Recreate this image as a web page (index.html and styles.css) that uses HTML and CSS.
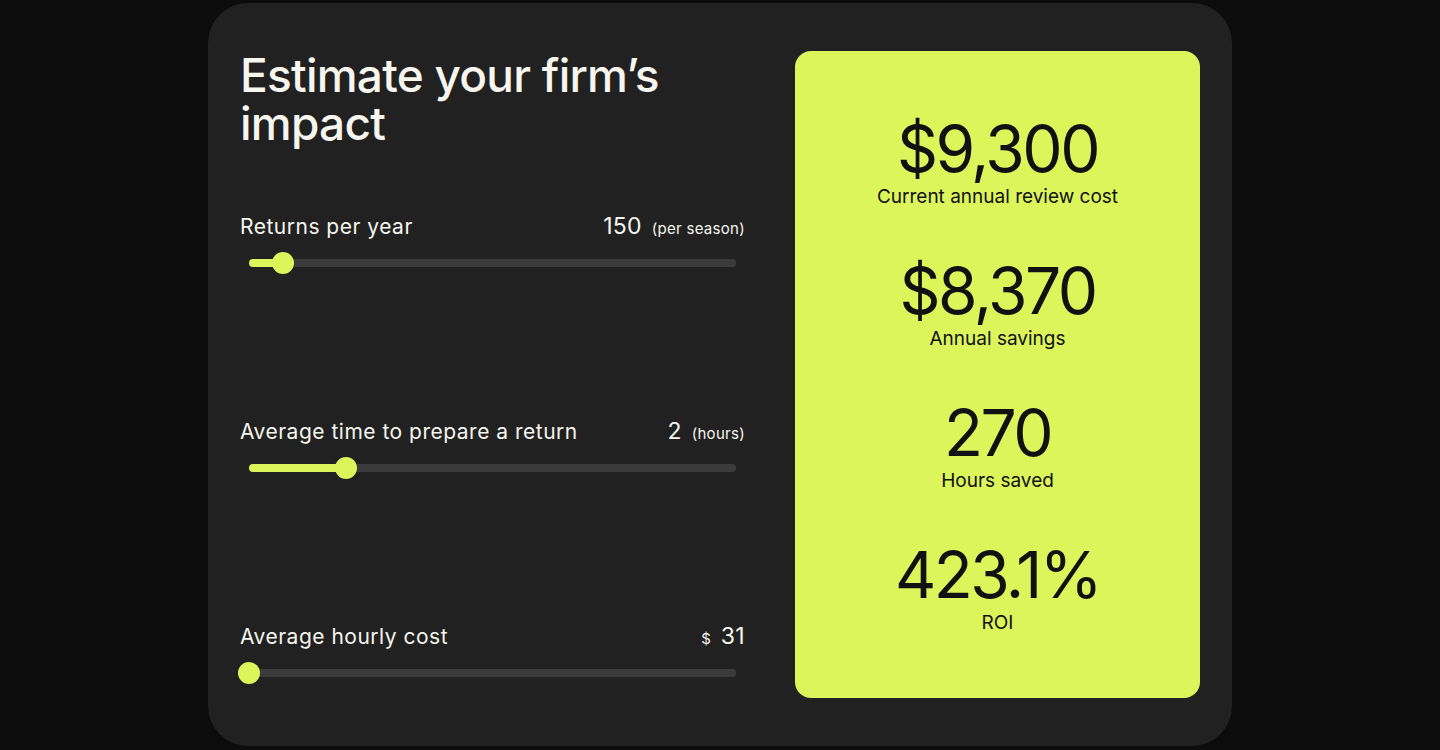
FILE: index.html
```html
<!DOCTYPE html>
<html lang="en">
<head>
    <meta charset="UTF-8">
    <meta name="viewport" content="width=device-width, initial-scale=1.0">
    <title>ROI Calculator</title>
    <link rel="stylesheet" href="styles.css">
</head>
<body>
    <div class="calculator">
        <div class="inputs">
            <h1>Estimate your firm’s impact</h1>

            <div class="field">
                <div class="field-head">
                    <span class="label">Returns per year</span>
                    <span class="value">150 <small>(per season)</small></span>
                </div>
                <div class="slider">
                    <div class="track"></div>
                    <div class="fill" style="width: 7%"></div>
                    <div class="thumb" style="left: 7%"></div>
                </div>
            </div>

            <div class="field">
                <div class="field-head">
                    <span class="label">Average time to prepare a return</span>
                    <span class="value">2 <small>(hours)</small></span>
                </div>
                <div class="slider">
                    <div class="track"></div>
                    <div class="fill" style="width: 20%"></div>
                    <div class="thumb" style="left: 20%"></div>
                </div>
            </div>

            <div class="field">
                <div class="field-head">
                    <span class="label">Average hourly cost</span>
                    <span class="value"><small class="unit">$</small> 31</span>
                </div>
                <div class="slider">
                    <div class="track"></div>
                    <div class="fill" style="width: 0%"></div>
                    <div class="thumb" style="left: 0%"></div>
                </div>
            </div>
        </div>

        <div class="results">
            <div class="stat">
                <div class="stat-number">$9,300</div>
                <div class="stat-label">Current annual review cost</div>
            </div>
            <div class="stat">
                <div class="stat-number">$8,370</div>
                <div class="stat-label">Annual savings</div>
            </div>
            <div class="stat">
                <div class="stat-number">270</div>
                <div class="stat-label">Hours saved</div>
            </div>
            <div class="stat">
                <div class="stat-number">423.1%</div>
                <div class="stat-label">ROI</div>
            </div>
        </div>
    </div>
</body>
</html>
```

FILE: styles.css
```css
body {
    margin: 0;
    background-color: #0c0c0c;
    font-family: Inter, "Noto Sans", sans-serif;
    color: #f6f5ee;
    padding-top: 3px;
}
.calculator {
    width: 1024px;
    height: 743px;
    margin: 0 auto;
    box-sizing: border-box;
    background-color: #212121;
    border-radius: 40px;
    padding: 48px 32px;
    display: flex;
    gap: 50px;
}
.inputs {
    width: 505px;
}
h1 {
    margin: 0 0 65px;
    font-size: 46px;
    line-height: 48px;
    font-weight: 500;
    letter-spacing: -0.75px;
}
.field {
    margin-bottom: 143px;
}
.field:last-child {
    margin-bottom: 0;
}
.field-head {
    height: 28px;
    display: flex;
    align-items: center;
    justify-content: space-between;
}
.label {
    font-size: 21px;
    letter-spacing: 0.5px;
}
.value {
    font-size: 23px;
    letter-spacing: 0.3px;
}
.value small {
    font-size: 15px;
    margin-left: 3px;
}
.value small.unit {
    margin: 0 3px 0 0;
}
.slider {
    position: relative;
    height: 22px;
    margin: 12px 9px 0;
}
.track {
    position: absolute;
    left: 0;
    right: 0;
    top: 7px;
    height: 8px;
    border-radius: 4px;
    background-color: #3b3b3b;
}
.fill {
    position: absolute;
    left: 0;
    top: 7px;
    height: 8px;
    border-radius: 4px;
    background-color: #dcf55a;
}
.thumb {
    position: absolute;
    top: 0;
    width: 22px;
    height: 22px;
    margin-left: -11px;
    border-radius: 50%;
    background-color: #dcf55a;
}
.results {
    width: 405px;
    box-sizing: border-box;
    background-color: #dcf55a;
    border-radius: 16px;
    padding-top: 66px;
    color: #111111;
    text-align: center;
    display: flex;
    flex-direction: column;
    gap: 50px;
}
.stat-number {
    font-size: 64px;
    line-height: 64px;
    letter-spacing: -2.5px;
}
.stat-label {
    margin-top: 4px;
    font-size: 19px;
    line-height: 24px;
}
```
